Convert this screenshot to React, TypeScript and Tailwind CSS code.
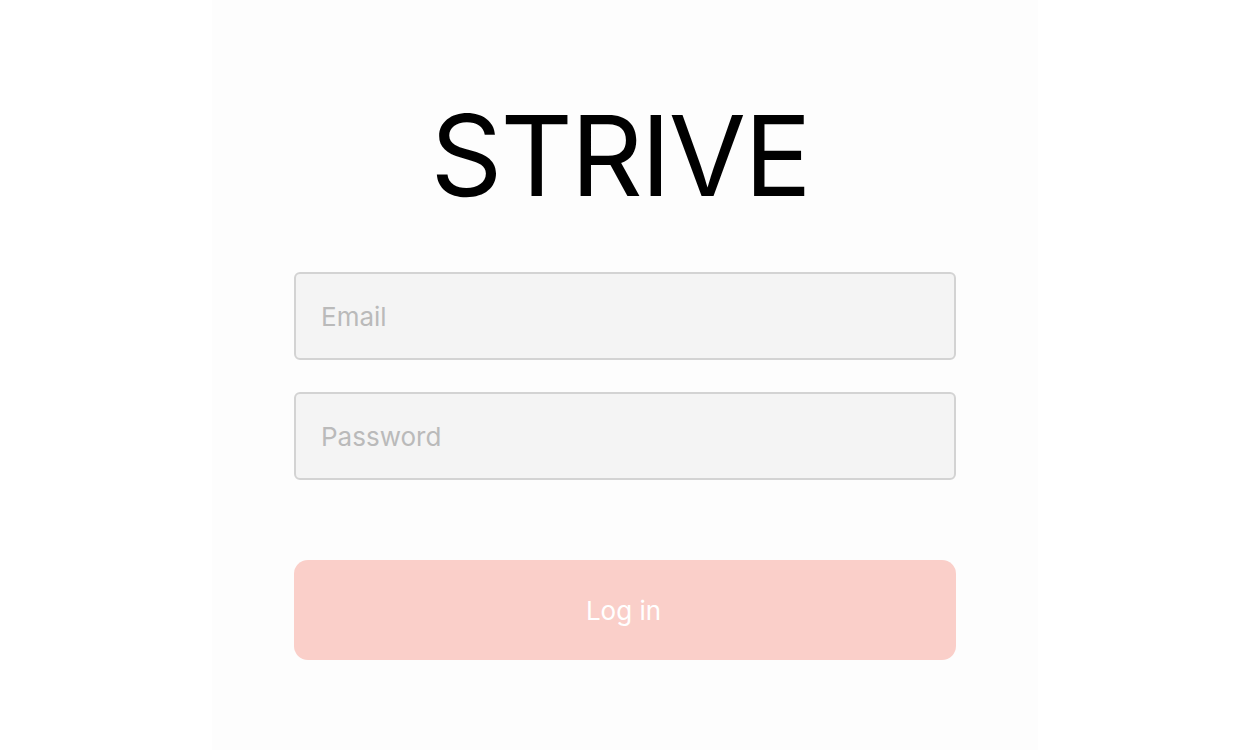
export default function App() {
  return (
    <div className="min-h-screen bg-white" style={{ fontFamily: "Inter, 'Liberation Sans', sans-serif" }}>
      <div className="mx-auto flex min-h-screen w-[826px] flex-col bg-[#fdfdfd] px-[82px]">
        <h1 className="mt-[90px] pr-[10px] text-center text-[112px] font-normal leading-[130px] tracking-[-2px] text-black">
          STRIVE
        </h1>
        <form className="mt-[52px] flex flex-col" onSubmit={(e) => e.preventDefault()}>
          <input
            type="email"
            placeholder="Email"
            className="h-[88px] w-full rounded-[6px] border-2 border-[#d3d3d3] bg-[#f4f4f4] px-[25px] text-[26px] text-black outline-none placeholder:text-[#bababa]"
          />
          <input
            type="password"
            placeholder="Password"
            className="mt-[32px] h-[88px] w-full rounded-[6px] border-2 border-[#d3d3d3] bg-[#f4f4f4] px-[25px] text-[26px] text-black outline-none placeholder:text-[#bababa]"
          />
          <button
            type="submit"
            className="mt-[80px] h-[100px] w-full rounded-[14px] bg-[#facfc9] pr-[3px] text-[26px] text-white"
          >
            Log in
          </button>
        </form>
      </div>
    </div>
  );
}
